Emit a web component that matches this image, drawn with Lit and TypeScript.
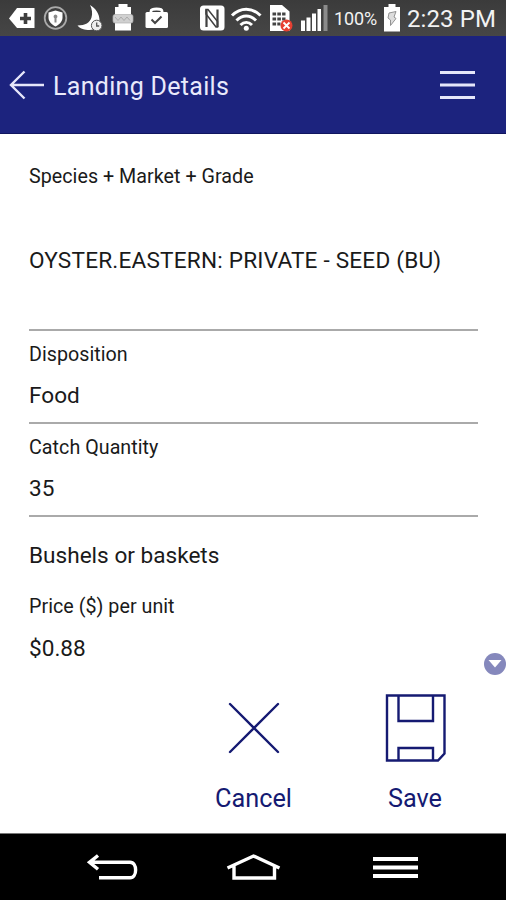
import { LitElement, html, css } from "lit";
import { customElement } from "lit/decorators.js";

@customElement("status-bar")
class StatusBar extends LitElement {
  static styles = css`
    :host { display: flex; flex: none; height: 36px; background: linear-gradient(#3b3b3b, #464646); color: #f2f2f2; }
    svg { display: block; }
    .icons { width: 332px; height: 36px; flex: none; }
    .pct { width: 46px; margin-left: 2px; font-size: 18px; line-height: 38px; letter-spacing: -0.1px; white-space: nowrap; }
    .bat { width: 20px; height: 36px; margin-left: 3px; flex: none; }
    .time { margin-left: 4px; font-size: 24px; line-height: 38px; letter-spacing: 0.1px; white-space: nowrap; }
  `;
  render() {
    return html`
      <svg class="icons" viewBox="0 0 332 36" fill="#fff">
        <path d="M9 18.500 17 8h17.500v20H17z" />
        <path d="M25.500 13v11M20 18.500h11" stroke="#3f3f3f" stroke-width="3.600" />
        <circle cx="55.500" cy="18" r="10.800" fill="none" stroke="#aaa" stroke-width="1.800" />
        <path d="M55.500 10.500 62.500 12.500v5c0 4-3 6.800-7 9-4-2.200-7-5-7-9v-5z" />
        <path d="M55.500 14.500a2 2 0 0 1 1 3.700v4.300h-2v-4.300a2 2 0 0 1 1-3.700z" fill="#888" />
        <path d="M90 5c6 3.500 9.500 9.500 9.500 15 0 6-4 10-10 10-5 0-9-1-12-4.500 8 0 12.500-3 14-8 1.300-4 .5-8.500-1.500-12.500z" />
        <circle cx="96.700" cy="25.500" r="5.300" fill="#eee" stroke="#555" />
        <path d="M96.700 22.500v3.500h2.500" fill="none" stroke="#555" stroke-width="1.300" />
        <path d="M118.500 4h9v3h3.500v23.500h-16V7h3.500z" />
        <rect x="113" y="14.500" width="20" height="8.500" rx="2" fill="#d0d0d0" stroke="#b0b0b0" stroke-width=".7" />
        <path d="m115 17 3 3.500 3-3.500 3 3.500 3-3.500 3 3.500" fill="none" stroke="#aaa" />
        <rect x="145.500" y="12" width="22.500" height="16" rx="1.500" />
        <path d="M151 13v-2q0-2 5.500-2t5.500 2v2" fill="none" stroke="#fff" stroke-width="2.800" />
        <path d="m151.500 19.500 3.500 3.500 6.500-6.500" fill="none" stroke="#444" stroke-width="2" />
        <rect x="200" y="5.500" width="24.500" height="25" rx="3.500" />
        <path d="M206.500 27V9.500M217.500 9.500V27" fill="none" stroke="#414141" stroke-width="2.200" />
        <path d="M206 9.500h2l9.500 12v5.500h-1.500l-10-13z" fill="none" stroke="#414141" stroke-width="1.500" />
        <g fill="none" stroke="#fff" stroke-width="3">
          <path d="M232 15.500c8.500-8.500 20-8.500 28.500 0M236.500 20.500c6-6 13.500-6 19.500 0M240.500 25c3.500-3.500 8-3.500 11.500 0" />
        </g>
        <circle cx="246.300" cy="28.300" r="2.500" />
        <path d="M270 5h12l7.500 6.500V31H270z" />
        <path d="M272.500 14h13M272.500 19h13M272.500 24h8" stroke="#444" stroke-width="3" stroke-dasharray="3.600 1.200" />
        <circle cx="286.500" cy="25.500" r="6" fill="#e74032" />
        <path d="m283.500 22.500 6 6m0-6-6 6" stroke="#fff" stroke-width="1.800" />
        <path d="M301 20.500h4V31h-4zM306.500 17.500h4V31h-4zM312 13.500h4V31h-4zM317.500 9h3.500v22h-3.500z" />
        <path d="M323.500 5h4v26h-4z" fill="#8b8b8b" />
      </svg>
      <span class="pct">100%</span>
      <svg class="bat" viewBox="0 0 20 36">
        <path d="M5.500 4h7v3H17v24.500H1V7h4.500z" fill="#fff" />
        <path d="m6 13 7-1.500-2 5.500 2 1.500-5.500 7V20L5 18z" fill="#ddd" stroke="#888" stroke-width=".9" />
      </svg>
      <span class="time">2:23 PM</span>
    `;
  }
}

@customElement("app-root")
class AppRoot extends LitElement {
  static styles = css`
    :host { display: flex; flex-direction: column; width: 506px; height: 900px; background: #fff; overflow: hidden;
      font-family: Roboto, "Liberation Sans", sans-serif; color: #1a1a1a; }
    svg { display: block; flex: none; }
    header, main, .scroll, .actions, nav { flex: none; box-sizing: border-box; }
    header { height: 98px; background: #1c237e; border-bottom: 1px solid #10155f; display: flex; align-items: center; color: #e9e9fb; }
    .back { width: 36px; height: 32px; margin-left: 9px; }
    h1 { margin: 4px 0 0 8px; font-weight: 400; font-size: 25px; line-height: 30px; flex: 1; letter-spacing: 0.3px; }
    .menu { width: 36px; height: 32px; margin-right: 30px; }
    main { height: 519px; padding: 31px 28px 0 29px; }
    .label { font-size: 19.700px; line-height: 24px; letter-spacing: 0.03px; }
    .value { font-size: 22.600px; line-height: 28px; margin-top: 15px; }
    .field { box-sizing: border-box; border-bottom: 2px solid #aaa; height: 93px; padding-top: 12px; }
    .species { height: 166px; padding-top: 0; }
    .species .value { margin-top: 58px; white-space: nowrap; letter-spacing: 0.2px; }
    .value.unit { margin-top: 25px; }
    .price { margin-top: 25px; }
    .price + .value { margin-top: 16px; }
    .scroll { display: flex; justify-content: flex-end; height: 23px; }
    .actions { display: flex; padding: 14px 10px 0 173px; height: 157px; color: #151a72; }
    .action { width: 161px; display: flex; flex-direction: column; align-items: center; font-size: 25.300px; line-height: 30px; }
    .action + .action { width: 162px; }
    .action svg { width: 70px; height: 76px; margin-bottom: 18px; }
    nav { height: 67px; background: #000; border-top: 1px solid #777; }
  `;
  render() {
    return html`
      <status-bar></status-bar>
      <header>
        <svg class="back" viewBox="0 0 36 32" fill="none" stroke="#e6e6fa" stroke-width="2.400"><path d="M2 16h33M15.500 2.500 2 16 15.500 29.500" /></svg>
        <h1>Landing Details</h1>
        <svg class="menu" viewBox="0 0 36 32"><path d="M0 3.500h35M0 16h35M0 28.500h35" stroke="#e6e6fa" stroke-width="2.800" /></svg>
      </header>
      <main>
        <div class="field species"><div class="label">Species + Market + Grade</div><div class="value">OYSTER.EASTERN: PRIVATE - SEED (BU)</div></div>
        <div class="field"><div class="label">Disposition</div><div class="value">Food</div></div>
        <div class="field"><div class="label">Catch Quantity</div><div class="value">35</div></div>
        <div class="value unit">Bushels or baskets</div>
        <div class="label price">Price ($) per unit</div>
        <div class="value">$0.88</div>
      </main>
      <div class="scroll">
        <svg width="22" height="23" viewBox="0 0 22 23"><circle cx="11" cy="11" r="11" fill="#8588bc" /><path d="M4.500 7h13L11 14.500z" fill="#fff" /></svg>
      </div>
      <div class="actions">
        <div class="action">
          <svg viewBox="0 0 70 76" fill="none" stroke="#151a72" stroke-width="2.400" stroke-linecap="round"><path d="m11 14 48 48M59 14 11 62" /></svg>
          Cancel
        </div>
        <div class="action">
          <svg viewBox="0 0 70 76" fill="none" stroke="#151a72" stroke-width="2.400"><path d="M7 5.500h57.500v58l-6.500 7H7zM18.500 5.500v25.500H53V5.500M18.500 70.500V58H53v12.500" /></svg>
          Save
        </div>
      </div>
      <nav>
        <svg width="506" height="66" viewBox="0 834 506 66" fill="none" stroke="#fff" stroke-width="3.400">
          <path d="M90 862.300h40c7.500 0 7.500 15.500 0 15.500H99M98 855.500l-8.500 6.800 8.500 7" />
          <path d="m227.500 868 26-12 26 12M234 865v13h40.500V865" />
          <path d="M373 859h45M373 867.500h45M373 876h45" stroke-width="3.800" />
        </svg>
      </nav>
    `;
  }
}
